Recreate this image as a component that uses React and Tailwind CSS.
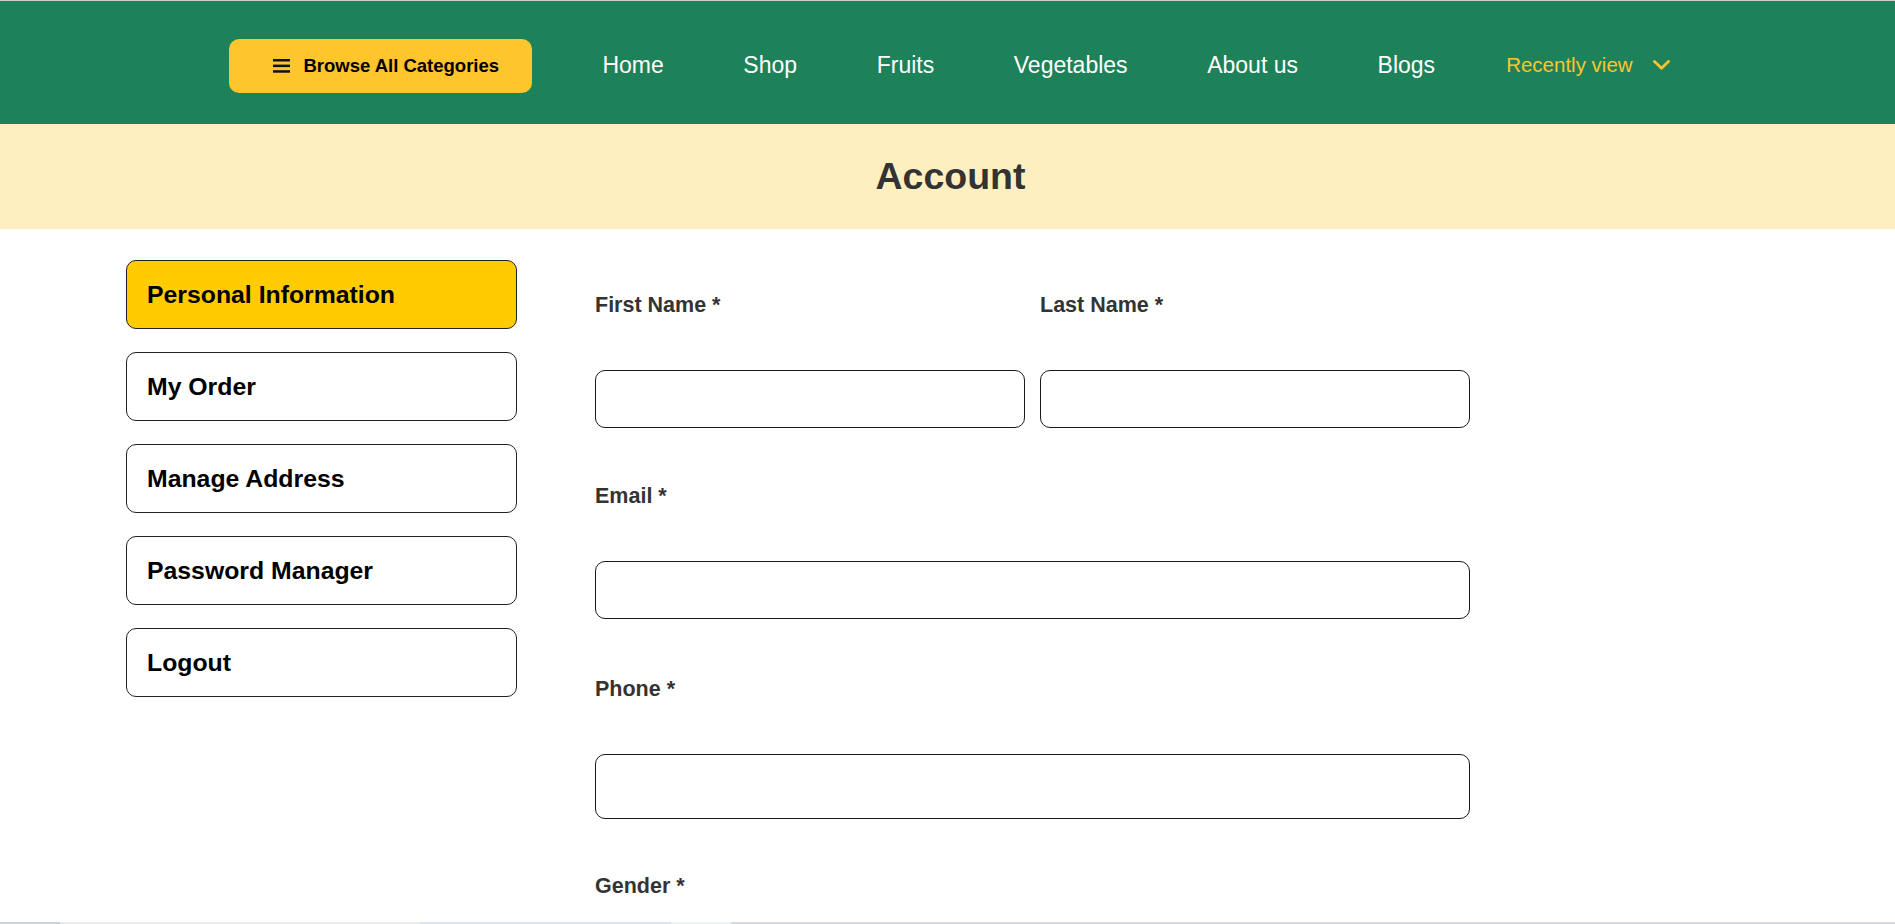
import React from 'react';

const navLinks = ['Home', 'Shop', 'Fruits', 'Vegetables', 'About us', 'Blogs'];
const menu = ['Personal Information', 'My Order', 'Manage Address', 'Password Manager', 'Logout'];

const Field = ({ label, tall, className = '' }) => (
  <div className={className}>
    <label className="block text-[21.5px] leading-[25px] font-bold text-[#333]">{label}</label>
    <input
      className={`block w-full mt-[52px] border border-[#1a1a1a] rounded-[10px] bg-white ${tall ? 'h-[65px]' : 'h-[58px]'}`}
    />
  </div>
);

const Header = () => (
  <header className="border-t border-[#cfcfcf] bg-[#1d8159] h-[124px]">
    <div className="flex items-start justify-center pt-[38px] pl-[4px]">
      <button className="w-[303px] h-[54px] rounded-[10px] bg-[#fec52d] flex items-center gap-[13px] pl-[44px] text-black">
        <svg width="17" height="14" viewBox="0 0 17 14">
          <rect x="0" y="0" width="17" height="2.5" fill="#111" />
          <rect x="0" y="5.6" width="17" height="2.5" fill="#111" />
          <rect x="0" y="11.2" width="17" height="2.5" fill="#111" />
        </svg>
        <span className="text-[18.5px] font-bold whitespace-nowrap">Browse All Categories</span>
      </button>
      <nav className="flex items-center ml-[70px] mt-[13px]">
        <ul className="flex items-center gap-[79.6px]">
          {navLinks.map((l) => (
            <li key={l} className="text-[23px] leading-[26px] text-white whitespace-nowrap">{l}</li>
          ))}
        </ul>
        <div className="flex items-center ml-[71px] text-[#fec52d]">
          <span className="text-[20.5px] leading-[24px] whitespace-nowrap">Recently view</span>
          <svg width="17" height="10" viewBox="0 0 17 10" className="ml-[20px]" fill="none">
            <polyline points="1.5,1.5 8.5,8.3 15.5,1.5" stroke="#fec52d" strokeWidth="2.8" strokeLinecap="round" strokeLinejoin="round" />
          </svg>
        </div>
      </nav>
    </div>
  </header>
);

export default function App() {
  return (
    <div className="h-[924px] overflow-hidden flex flex-col bg-white" style={{ fontFamily: '"Liberation Sans", Arial, sans-serif' }}>
      <Header />

      <div className="h-[105px] bg-[#feefc1] flex items-center justify-center">
        <h1 className="text-[37.5px] font-bold text-[#333] pl-[6px]">Account</h1>
      </div>

      <main className="flex-1 flex pl-[126px] pt-[31px]">
        <aside className="w-[391px] flex flex-col gap-[23px]">
          {menu.map((m, i) => (
            <div
              key={m}
              className={`h-[69px] rounded-[10px] border border-[#222] px-[20px] flex items-center text-[24.8px] font-bold text-black ${
                i === 0 ? 'bg-[#ffcc00]' : 'bg-white'
              }`}
            >
              {m}
            </div>
          ))}
        </aside>

        <form className="w-[875px] ml-[78px] mt-[33px]">
          <div className="grid grid-cols-2 gap-[15px]">
            <Field label="First Name *" />
            <Field label="Last Name *" />
          </div>
          <Field label="Email *" className="mt-[56px]" />
          <Field label="Phone *" tall className="mt-[58px]" />
          <div className="mt-[55px]">
            <label className="block text-[21.5px] leading-[25px] font-bold text-[#333]">Gender *</label>
          </div>
        </form>
      </main>

      <div className="h-[2px] flex shrink-0">
        <div className="w-[60px] bg-[#cdd2d6]" />
        <div className="w-[360px] bg-[#ececec]" />
        <div className="w-[251px] bg-[#d9e6ef]" />
        <div className="w-[60px] bg-[#edf2f5]" />
        <div className="flex-1 bg-[#d3dbe1]" />
      </div>
    </div>
  );
}
